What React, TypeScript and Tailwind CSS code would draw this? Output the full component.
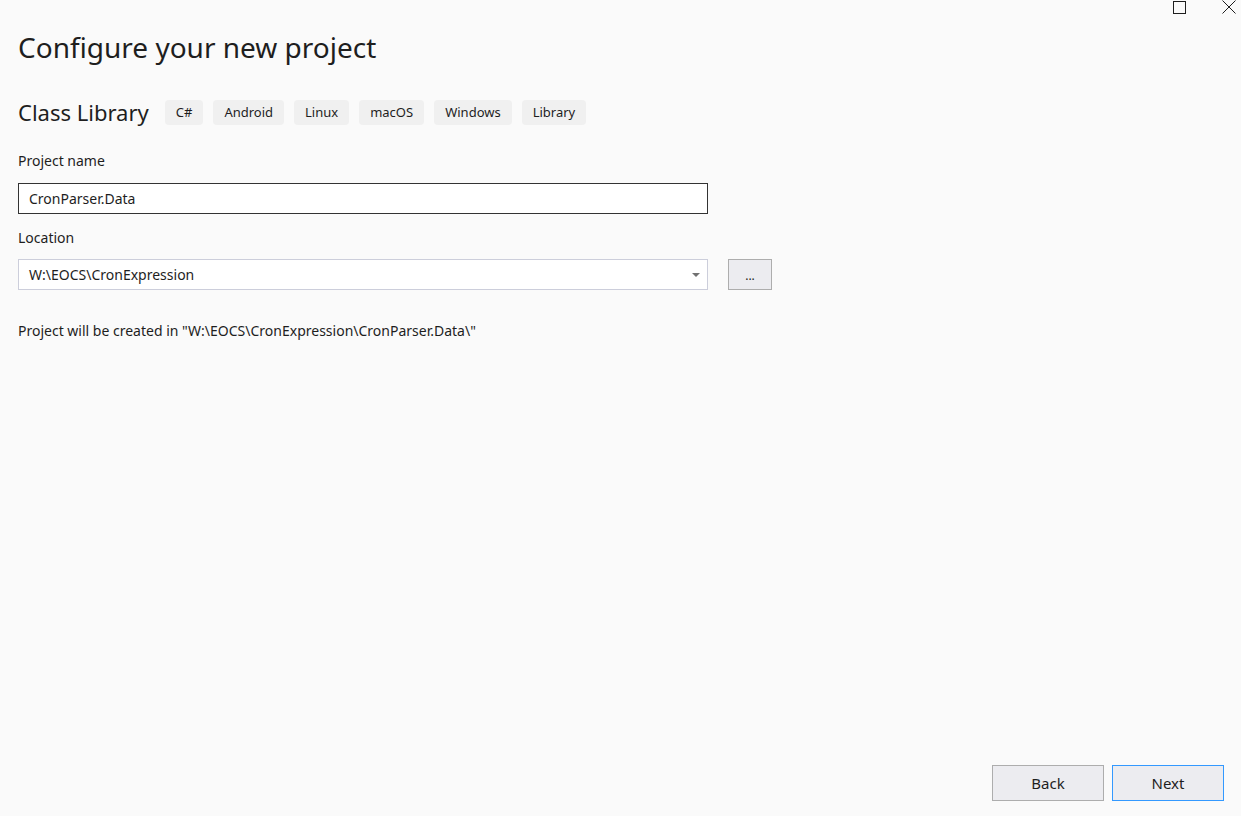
import React from "react";

const tags = ["C#", "Android", "Linux", "macOS", "Windows", "Library"];

export default function App() {
  return (
    <div
      className="relative w-[1241px] h-[816px] bg-[#fafafa] text-[#1e1e1e] overflow-hidden flex flex-col"
      style={{ fontFamily: '"Noto Sans", "Open Sans", sans-serif' }}
    >
      {/* window controls */}
      <div className="absolute top-0 right-0 flex items-start gap-[36px] pr-[5px]">
        <svg width="13" height="14" viewBox="0 0 13 14">
          <rect x="0.5" y="1.5" width="12" height="12" fill="none" stroke="#1e1e1e" strokeWidth="1" />
        </svg>
        <svg width="14" height="14" viewBox="0 0 14 14">
          <path d="M0.5 0.5 L13.5 13.5 M13.5 0.5 L0.5 13.5" stroke="#1e1e1e" strokeWidth="1" />
        </svg>
      </div>

      <div className="flex-1 flex flex-col pl-[18px] pt-[29px]">
        <h1 className="text-[28px] leading-[36px] font-normal">Configure your new project</h1>

        <div className="flex items-center mt-[22px] h-[50px]">
          <h2 className="text-[22px] leading-[28px] mr-[16px]">Class Library</h2>
          <div className="flex gap-[10px]">
            {tags.map((t) => (
              <span
                key={t}
                className="h-[25px] px-[11px] rounded-[4px] bg-[#f0f0f0] text-[13px] leading-[25px]"
              >
                {t}
              </span>
            ))}
          </div>
        </div>

        <label className="mt-[14px] text-[14px] leading-[20px]">Project name</label>
        <div className="mt-[12px] w-[690px] h-[31px] bg-white border border-[#333333] flex items-center pl-[10px] text-[14px]">
          CronParser.Data
        </div>

        <label className="mt-[14px] text-[14px] leading-[20px]">Location</label>
        <div className="mt-[11px] flex gap-[20px]">
          <div className="w-[690px] h-[31px] bg-white border border-[#cccedb] flex items-center justify-between pl-[10px] pr-[7px] text-[14px]">
            <span>W:\EOCS\CronExpression</span>
            <svg width="8" height="4" viewBox="0 0 8 4">
              <path d="M0 0 L8 0 L4 4 Z" fill="#717171" />
            </svg>
          </div>
          <button className="w-[44px] h-[31px] bg-[#ececf0] border border-[#adadad] text-[12px] leading-none pt-[2px]">
            ...
          </button>
        </div>

        <p className="mt-[31px] text-[14px] leading-[20px]">
          Project will be created in "W:\EOCS\CronExpression\CronParser.Data\"
        </p>
      </div>

      <div className="flex justify-end gap-[8px] pr-[17px] pb-[15px]">
        <button className="w-[112px] h-[36px] bg-[#ececf0] border border-[#adadad] text-[15px]">
          Back
        </button>
        <button className="w-[112px] h-[36px] bg-[#ececf0] border border-[#3399ff] text-[15px]">
          Next
        </button>
      </div>
    </div>
  );
}
